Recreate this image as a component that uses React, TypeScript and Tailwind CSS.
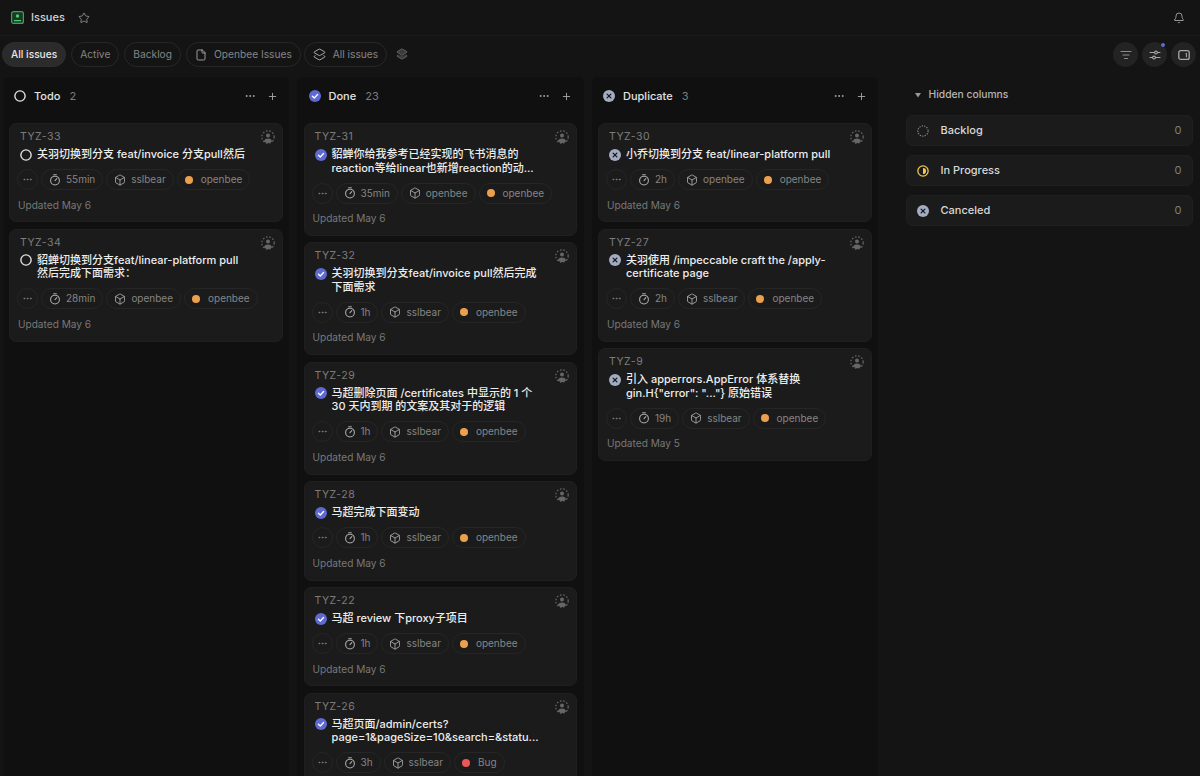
import { Bell, Box, Ellipsis, File, Layers2, ListFilter, Plus, Star } from 'lucide-react'

type Status = 'todo' | 'done' | 'dup'

type Issue = {
  id: string
  title: string[]
  time: string
  project: string
  label: string
  labelColor?: string
  updated?: string
}

const todo: Issue[] = [
  { id: 'TYZ-33', title: ['关羽切换到分支 feat/invoice 分支pull然后'], time: '55min', project: 'sslbear', label: 'openbee' },
  { id: 'TYZ-34', title: ['貂蝉切换到分支feat/linear-platform pull', '然后完成下面需求：'], time: '28min', project: 'openbee', label: 'openbee' },
]

const done: Issue[] = [
  { id: 'TYZ-31', title: ['貂蝉你给我参考已经实现的飞书消息的', 'reaction等给linear也新增reaction的动...'], time: '35min', project: 'openbee', label: 'openbee' },
  { id: 'TYZ-32', title: ['关羽切换到分支feat/invoice pull然后完成', '下面需求'], time: '1h', project: 'sslbear', label: 'openbee' },
  { id: 'TYZ-29', title: ['马超删除页面 /certificates 中显示的 1 个', '30 天内到期 的文案及其对于的逻辑'], time: '1h', project: 'sslbear', label: 'openbee' },
  { id: 'TYZ-28', title: ['马超完成下面变动'], time: '1h', project: 'sslbear', label: 'openbee' },
  { id: 'TYZ-22', title: ['马超 review 下proxy子项目'], time: '1h', project: 'sslbear', label: 'openbee' },
  { id: 'TYZ-26', title: ['马超页面/admin/certs?', 'page=1&pageSize=10&search=&statu...'], time: '3h', project: 'sslbear', label: 'Bug', labelColor: 'bg-[#eb5757]' },
]

const dup: Issue[] = [
  { id: 'TYZ-30', title: ['小乔切换到分支 feat/linear-platform pull'], time: '2h', project: 'openbee', label: 'openbee' },
  { id: 'TYZ-27', title: ['关羽使用 /impeccable craft the /apply-', 'certificate page'], time: '2h', project: 'sslbear', label: 'openbee' },
  { id: 'TYZ-9', title: ['引入 apperrors.AppError 体系替换', 'gin.H{"error": "..."} 原始错误'], time: '19h', project: 'sslbear', label: 'openbee', updated: 'Updated May 5' },
]

function StatusIcon({ status, size = 12 }: { status: Status; size?: number }) {
  if (status === 'todo') {
    return (
      <svg width={size} height={size} viewBox="0 0 14 14" fill="none" className="shrink-0">
        <circle cx="7" cy="7" r="6" stroke="#e6e6e6" strokeWidth="1.6" />
      </svg>
    )
  }
  if (status === 'done') {
    return (
      <svg width={size} height={size} viewBox="0 0 14 14" fill="none" className="shrink-0">
        <circle cx="7" cy="7" r="7" fill="#5e6ad2" />
        <path d="M4 7.2 6.2 9.3 10 5.2" stroke="#ffffff" strokeWidth="1.5" strokeLinecap="round" strokeLinejoin="round" />
      </svg>
    )
  }
  return (
    <svg width={size} height={size} viewBox="0 0 14 14" fill="none" className="shrink-0">
      <circle cx="7" cy="7" r="7" fill="#a3adc2" />
      <path d="M4.8 4.8 9.2 9.2M9.2 4.8 4.8 9.2" stroke="#1a1a1d" strokeWidth="1.6" strokeLinecap="round" />
    </svg>
  )
}

function Assignee() {
  return (
    <svg width="14" height="14" viewBox="0 0 14 14" fill="none" className="absolute right-[7px] top-[6px] text-[#666666]">
      <circle cx="7" cy="7" r="6.2" stroke="currentColor" strokeWidth="1.2" strokeDasharray="1.6 1.7" />
      <circle cx="7" cy="5.4" r="2" fill="currentColor" />
      <path d="M2.9 11.2C3.6 9.3 5 8.6 7 8.6s3.4.7 4.1 2.6C10 12.4 8.6 13 7 13s-3-.6-4.1-1.8Z" fill="currentColor" />
    </svg>
  )
}

function TimerIcon() {
  return (
    <svg width="12" height="12" viewBox="0 0 12 12" fill="none" stroke="#a8a8a8" strokeWidth="1.1" strokeLinecap="round" className="shrink-0">
      <path d="M4.6 0.8h2.8" />
      <circle cx="6" cy="6.6" r="4.4" />
      <path d="M6 6.6 7.8 4.6" />
    </svg>
  )
}

function Chip({ children }: { children: React.ReactNode }) {
  return (
    <div className="flex h-[21px] items-center gap-[5px] rounded-full border border-[#262626] px-[7px] text-[10px] text-[#858585]">
      {children}
    </div>
  )
}

function Card({ issue, status }: { issue: Issue; status: Status }) {
  return (
    <div className="relative rounded-[7px] border border-[#1f1f1f] bg-[#1b1b1b] pb-[9.8px] pl-[7px] pr-[8px] pt-[6px]">
      <Assignee />
      <div className="pl-[3px] text-[10.5px] leading-[14px] tracking-[0.5px] text-[#7d7d7d]">{issue.id}</div>
      <div className="mt-[4px] flex gap-[5px] pl-[3px]">
        <div className="flex h-[13px] items-center">
          <StatusIcon status={status} />
        </div>
        <div className="text-[11px] font-medium leading-[13.5px] text-[#ededed]">
          {issue.title.map((line) => (
            <div key={line} className="whitespace-nowrap">{line}</div>
          ))}
        </div>
      </div>
      <div className="mt-[7.5px] flex items-center gap-[3px]">
        <div className="flex h-[21px] w-[21px] items-center justify-center rounded-full border border-[#262626] text-[#7d7d7d]">
          <Ellipsis size={11} />
        </div>
        <Chip>
          <TimerIcon />
          {issue.time}
        </Chip>
        <Chip>
          <Box size={12} strokeWidth={1.5} className="text-[#bdbdbd]" />
          {issue.project}
        </Chip>
        <Chip>
          <span className={`mr-[3px] h-[8px] w-[8px] rounded-full ${issue.labelColor ?? 'bg-[#eca04e]'}`} />
          {issue.label}
        </Chip>
      </div>
      <div className="mt-[7.6px] pl-[1px] text-[10.1px] leading-[14px] text-[#787878]">{issue.updated ?? 'Updated May 6'}</div>
    </div>
  )
}

function Column({ name, count, status, issues }: { name: string; count: number; status: Status; issues: Issue[] }) {
  return (
    <div className="flex w-[286.5px] shrink-0 flex-col gap-[6.5px] rounded-t-[6px] bg-[#101010] px-[6.5px]">
      <div className="flex h-[39.5px] shrink-0 items-center pb-[1px] pl-[5px] pr-[5px]">
        <StatusIcon status={status} />
        <span className="ml-[8px] text-[11px] font-medium text-[#e2e2e2]">{name}</span>
        <span className="ml-[9px] text-[11px] text-[#7d7d7d]">{count}</span>
        <div className="ml-auto flex items-center gap-[11px] text-[#a6a6a6]">
          <Ellipsis size={12} />
          <Plus size={11} />
        </div>
      </div>
      {issues.map((issue) => (
        <Card key={issue.id} issue={issue} status={status} />
      ))}
    </div>
  )
}

function ViewTab({ children, active }: { children: React.ReactNode; active?: boolean }) {
  return (
    <div
      className={`flex h-[25px] items-center gap-[7px] rounded-full border px-[8px] text-[10.2px] ${
        active ? 'border-[#2e2e2e] bg-[#2b2b2b] font-medium text-[#e6e6e6]' : 'border-[#272727] text-[#858585]'
      }`}
    >
      {children}
    </div>
  )
}

function RoundButton({ children, dot }: { children: React.ReactNode; dot?: boolean }) {
  return (
    <div className="relative flex h-[25px] w-[25px] items-center justify-center rounded-full bg-[#232323] text-[#a8a8a8]">
      {children}
      {dot && <span className="absolute right-[2px] top-[1px] h-[4px] w-[4px] rounded-full bg-[#5e6ad2]" />}
    </div>
  )
}

function HiddenRow({ name, icon }: { name: string; icon: React.ReactNode }) {
  return (
    <div className="flex h-[31px] items-center rounded-[6px] border border-[#1f1f1f] bg-[#1b1b1b] pl-[10px] pr-[10px]">
      {icon}
      <span className="ml-[12px] text-[11px] font-medium text-[#d8d8d8]">{name}</span>
      <span className="ml-auto text-[11px] text-[#7d7d7d]">0</span>
    </div>
  )
}

export default function App() {
  return (
    <div className="flex h-[776px] w-[1200px] flex-col overflow-hidden bg-[#141414] font-['Inter','Noto_Sans_CJK_SC',sans-serif]">
      <div className="flex h-[36px] shrink-0 items-center border-b border-[#1b1b1b] pl-[11px] pr-[15px]">
        <svg width="13" height="13" viewBox="0 0 13 13" fill="none">
          <rect x="0.6" y="0.6" width="11.8" height="11.8" rx="2" fill="#173b22" stroke="#3fa35c" strokeWidth="1.2" />
          <circle cx="6.5" cy="5" r="1.7" fill="#55c577" />
          <path d="M3.4 9.6h6.2" stroke="#55c577" strokeWidth="1.3" strokeLinecap="round" />
        </svg>
        <span className="ml-[7px] text-[11px] font-medium text-[#d4d4d4]">Issues</span>
        <Star size={12} strokeWidth={1.5} className="ml-[13px] text-[#a8a8a8]" />
        <Bell size={12} strokeWidth={1.6} className="ml-auto text-[#b5b5b5]" />
      </div>
      <div className="flex h-[41px] shrink-0 items-start gap-[5px] pl-[2px] pr-[4px] pt-[6px]">
        <ViewTab active>All issues</ViewTab>
        <ViewTab>Active</ViewTab>
        <ViewTab>Backlog</ViewTab>
        <ViewTab>
          <File size={12} strokeWidth={1.6} className="text-[#bdbdbd]" />
          Openbee Issues
        </ViewTab>
        <div className="-ml-[2px]">
          <ViewTab>
            <Layers2 size={13} strokeWidth={1.6} className="text-[#bdbdbd]" />
            All issues
          </ViewTab>
        </div>
        <Layers2 size={12} strokeWidth={1.6} className="ml-[4px] mt-[6px] fill-[#3a3a3a] text-[#6e6e6e]" />
        <div className="ml-auto flex items-center gap-[4px]">
          <RoundButton><ListFilter size={12} strokeWidth={1.6} /></RoundButton>
          <RoundButton dot>
            <svg width="12" height="12" viewBox="0 0 12 12" fill="none" stroke="currentColor" strokeWidth="1.1" strokeLinecap="round">
              <path d="M1 3.5h10M1 8.5h10" />
              <circle cx="7" cy="3.5" r="1.4" fill="#232323" />
              <circle cx="5" cy="8.5" r="1.4" fill="#232323" />
            </svg>
          </RoundButton>
          <RoundButton>
            <svg width="12" height="12" viewBox="0 0 12 12" fill="none" stroke="currentColor" strokeLinecap="round">
              <rect x="0.8" y="1.6" width="10.4" height="8.8" rx="2" strokeWidth="1.3" />
              <path d="M8.4 4.2v3.6" strokeWidth="1.1" />
            </svg>
          </RoundButton>
        </div>
      </div>
      <div className="flex min-h-0 flex-1 gap-[8px] pl-[2.5px]">
        <Column name="Todo" count={2} status="todo" issues={todo} />
        <Column name="Done" count={23} status="done" issues={done} />
        <Column name="Duplicate" count={3} status="dup" issues={dup} />
        <div className="ml-[19.5px] flex w-[287px] shrink-0 flex-col gap-[4px]">
          <div className="flex h-[34px] items-center gap-[8px] pl-[9px] pt-[1px] text-[10.3px] font-medium text-[#b5b5b5]">
            <svg width="6" height="6" viewBox="0 0 6 6" fill="#9a9a9a">
              <path d="M0 1h6L3 5.6Z" />
            </svg>
            <span>Hidden columns</span>
          </div>
          <div className="flex flex-col gap-[9px]">
            <HiddenRow
              name="Backlog"
              icon={
                <svg width="12" height="12" viewBox="0 0 14 14" fill="none">
                  <circle cx="7" cy="7" r="6" stroke="#8a8a8a" strokeWidth="1.4" strokeDasharray="1.4 1.5" />
                </svg>
              }
            />
            <HiddenRow
              name="In Progress"
              icon={
                <svg width="12" height="12" viewBox="0 0 14 14" fill="none">
                  <circle cx="7" cy="7" r="6" stroke="#f2c94c" strokeWidth="1.5" />
                  <path d="M7 3.4a3.6 3.6 0 0 1 0 7.2Z" fill="#f2c94c" />
                </svg>
              }
            />
            <HiddenRow name="Canceled" icon={<StatusIcon status="dup" />} />
          </div>
        </div>
      </div>
    </div>
  )
}
